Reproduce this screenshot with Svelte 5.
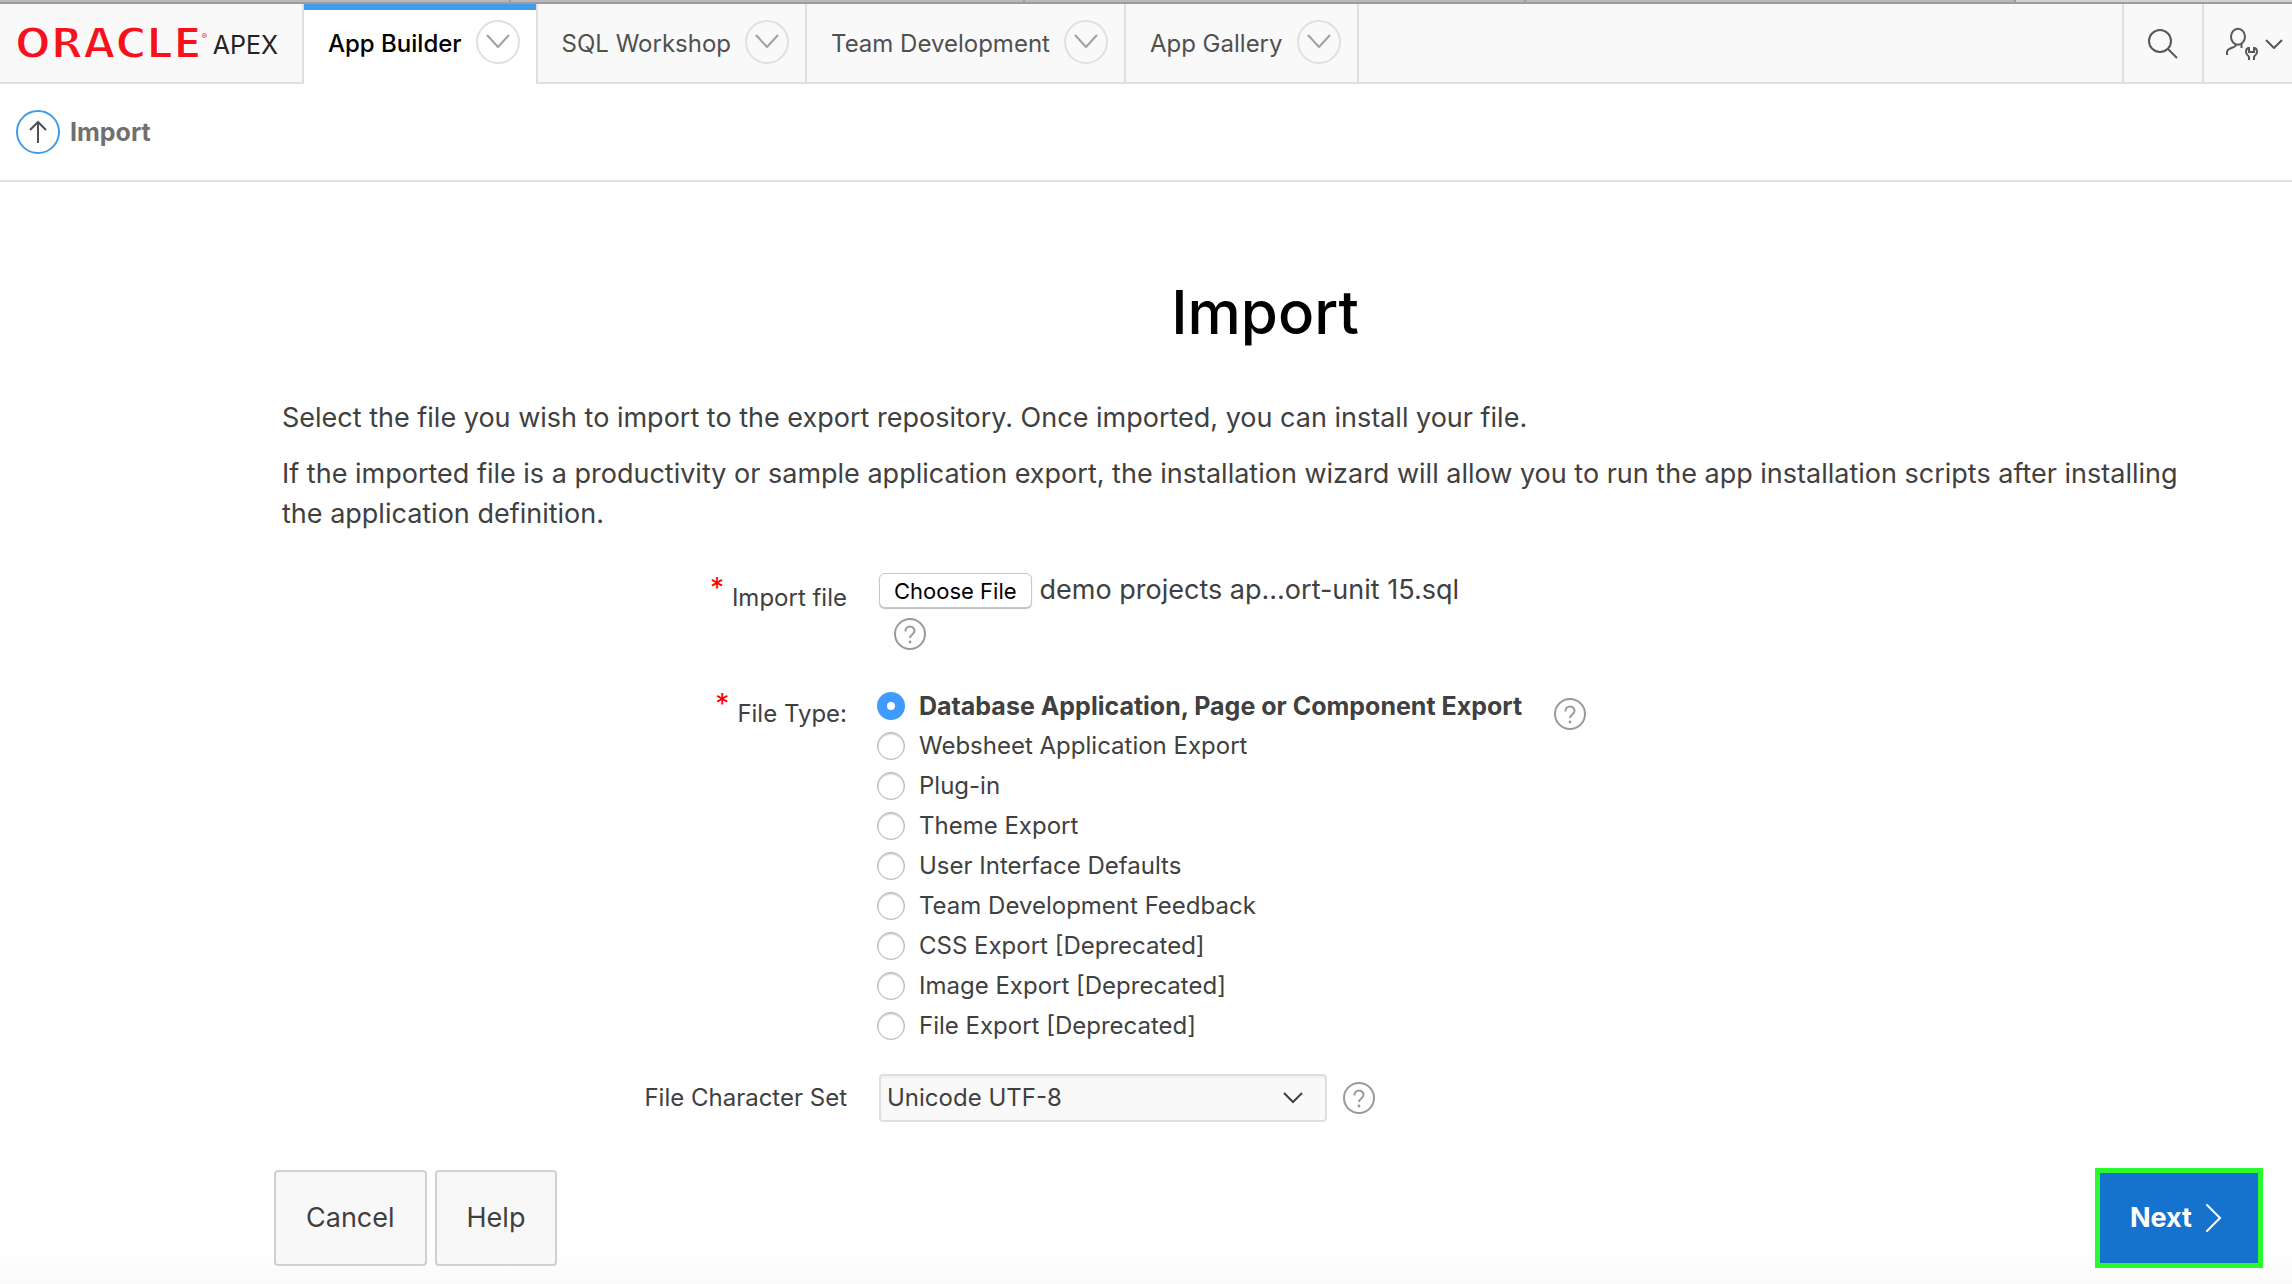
<script>
  const tabs = [
    { name: 'App Builder', active: true },
    { name: 'SQL Workshop', active: false },
    { name: 'Team Development', active: false },
    { name: 'App Gallery', active: false }
  ];

  const fileTypes = [
    'Database Application, Page or Component Export',
    'Websheet Application Export',
    'Plug-in',
    'Theme Export',
    'User Interface Defaults',
    'Team Development Feedback',
    'CSS Export [Deprecated]',
    'Image Export [Deprecated]',
    'File Export [Deprecated]'
  ];

  let fileType = $state(fileTypes[0]);
  let fileName = $state('demo projects ap...ort-unit 15.sql');
  let picker;

  function onPick() {
    if (picker.files.length) fileName = picker.files[0].name;
  }
</script>

{#snippet help(about)}
  <button type="button" class="help" aria-label="Help: {about}">
    <svg viewBox="0 0 32 32" width="32" height="32" fill="none" stroke="#999" stroke-width="2">
      <circle cx="16" cy="16" r="15" />
      <path d="M11.500 13.500v-.5a4.500 4.500 0 0 1 9 0c0 3.500-4.500 3.500-4.500 7" />
      <circle cx="16" cy="24" r="1.400" fill="#999" stroke="none" />
    </svg>
  </button>
{/snippet}

<div class="page">
  <div class="strip"><i></i><i></i><i></i><i></i><i class="light"></i></div>
  <header>
    <a class="logo" href="#home">
      <span class="oracle">ORACLE</span><sup>®</sup><span class="apex">APEX</span>
    </a>
    <nav>
      {#each tabs as tab}
        <div class="tab" class:active={tab.active}>
          <a href="#{tab.name}">{tab.name}</a>
          <button type="button" class="drop" aria-label="{tab.name} menu">
            <svg viewBox="0 0 24 16" width="24" height="16" fill="none" stroke="#a0a0a0" stroke-width="2"><path d="M1 1l11 12L23 1" /></svg>
          </button>
        </div>
      {/each}
    </nav>
    <button type="button" class="tool search" aria-label="Search">
      <svg viewBox="0 0 32 32" width="32" height="32" fill="none" stroke="#585858" stroke-width="2">
        <circle cx="13" cy="13" r="11" /><path d="M21 21l9 9" />
      </svg>
    </button>
    <button type="button" class="tool user" aria-label="Account">
      <svg viewBox="0 0 32 34" width="32" height="34" fill="none" stroke="#585858" stroke-width="2">
        <ellipse cx="12" cy="9.700" rx="7" ry="8" />
        <path d="M9.500 17v2c-1.500 2-8.500 2-8.500 6v3M15.500 17v4" />
        <path d="M23 33v-3c0-1-3-2-3-5 0-2 1-4 3-4v4h5v-4c2 0 3 2 3 4 0 3-3 4-3 5v3" />
      </svg>
      <svg viewBox="0 0 18 10" width="18" height="10" fill="none" stroke="#585858" stroke-width="2"><path d="M1 1l8 8 8-8" /></svg>
    </button>
  </header>

  <div class="crumbs">
    <a class="up" href="#up" aria-label="Up">
      <svg viewBox="0 0 18 24" width="18" height="24" fill="none" stroke="#505050" stroke-width="2"><path d="M9 23V2M1 10l8-8 8 8" /></svg>
    </a>
    <strong>Import</strong>
  </div>

  <main>
    <h1>Import</h1>
    <p>Select the file you wish to import to the export repository. Once imported, you can install your file.</p>
    <p>If the imported file is a productivity or sample application export, the installation wizard will allow you to run the app installation scripts after installing the application definition.</p>

    <form onsubmit={(e) => e.preventDefault()}>
      <div class="row">
        <label class="label" for="import-file"><span class="star">*</span>Import file</label>
        <div>
          <div class="file">
            <input id="import-file" type="file" tabindex="-1" bind:this={picker} onchange={onPick} />
            <button type="button" class="choose" onclick={() => picker.click()}>Choose File</button>
            <span>{fileName}</span>
          </div>
          <div class="below">{@render help('Import file')}</div>
        </div>
      </div>

      <div class="row" role="radiogroup" aria-labelledby="type-label">
        <span class="label" id="type-label"><span class="star">*</span>File Type:</span>
        <div class="types">
          <div>
            {#each fileTypes as type}
              <label class="type" class:chosen={type === fileType}>
                <input type="radio" name="file-type" value={type} bind:group={fileType} />
                {type}
              </label>
            {/each}
          </div>
          {@render help('File Type')}
        </div>
      </div>

      <div class="row middle">
        <label class="label" for="charset">File Character Set</label>
        <div class="charset">
          <div class="select">
            <select id="charset"><option>Unicode UTF-8</option></select>
            <svg viewBox="0 0 20 12" width="20" height="12" fill="none" stroke="#404040" stroke-width="2"><path d="M1 1l9 9 9-9" /></svg>
          </div>
          {@render help('File Character Set')}
        </div>
      </div>
    </form>
  </main>

  <footer>
    <button type="button">Cancel</button>
    <button type="button">Help</button>
    <button type="button" class="next">
      Next
      <svg viewBox="0 0 16 28" width="16" height="28" fill="none" stroke="#fff" stroke-width="2" stroke-linecap="round"><path d="M1 1l13 13L1 27" /></svg>
    </button>
  </footer>
</div>

<style>
  :global(body) { background: #fff; }
  .page {
    display: flex;
    flex-direction: column;
    min-height: 100vh;
    box-sizing: border-box;
    font-family: Inter, 'Liberation Sans', sans-serif;
    font-size: 24px;
    line-height: 40px;
    color: #404040;
    background: linear-gradient(to top, #fafafa, #fff 40px);
  }
  button, select { font: inherit; color: inherit; cursor: pointer; }
  button { padding: 0; border: 0; background: none; }
  svg { display: block; flex: none; }
  a { color: inherit; text-decoration: none; }

  .strip {
    display: grid;
    grid-template-columns: 511fr 514fr 501fr 490fr 276fr;
    border-bottom: 2px solid #9f9ca0;
  }
  .strip i { height: 2px; background: #bab7bb; border-right: 2px solid #9f9ca0; }
  .strip .light { background: #d4d2d6; border-right: 0; }

  header {
    display: flex;
    height: 80px;
    background: linear-gradient(#dfdfdf, #dfdfdf) bottom / 100% 2px no-repeat #f9f9f9;
  }
  .logo {
    display: flex;
    align-items: center;
    box-sizing: border-box;
    width: 304px;
    padding: 0 24px 0 15px;
    border-right: 2px solid #dfdfdf;
  }
  .oracle {
    font-family: 'DejaVu Sans', sans-serif;
    font-size: 42px;
    font-weight: 700;
    color: #f8111c;
    -webkit-text-stroke: 2px #f9f9f9;
  }
  sup { align-self: flex-start; padding-top: 12px; font-size: 8px; color: #f8111c; }
  .apex { margin-left: auto; padding-top: 2px; font-size: 25px; color: #222; }
  nav { display: flex; flex: 1; }
  .tab {
    display: flex;
    align-items: center;
    gap: 14px;
    padding: 0 16px 4px 24px;
    border-right: 2px solid #dfdfdf;
    color: #505050;
  }
  .tab a { padding-top: 3px; }
  .tab.active { background: #fff; box-shadow: inset 0 6px #409ce6; font-weight: 500; color: #000; }
  .drop {
    display: grid;
    place-items: center;
    box-sizing: border-box;
    width: 44px;
    height: 44px;
    border: 2px solid #e0e0e0;
    border-radius: 50%;
  }
  .tool {
    display: flex;
    align-items: center;
    justify-content: center;
    box-sizing: border-box;
    width: 80px;
    border-left: 2px solid #dfdfdf;
  }
  .user { justify-content: flex-start; width: 90px; gap: 7px; padding-left: 22px; }

  .crumbs {
    display: flex;
    align-items: center;
    gap: 10px;
    height: 96px;
    padding-left: 16px;
    border-bottom: 2px solid #dfdfdf;
    font-size: 25px;
    color: #707070;
  }
  .up {
    display: grid;
    place-items: center;
    box-sizing: border-box;
    width: 44px;
    height: 44px;
    border: 2px solid #409ce6;
    border-radius: 50%;
  }

  main { padding: 90px 44px 0 282px; }
  h1 {
    margin: 0 0 46px;
    font-size: 60px;
    line-height: 80px;
    font-weight: 500;
    text-align: center;
    color: #000;
  }
  p { margin: 0 32px 16px 0; font-size: 27px; }
  form { padding-top: 20px; }
  .row { display: grid; grid-template-columns: 565px 1fr; column-gap: 32px; margin-bottom: 28px; }
  .label { display: flex; justify-content: flex-end; gap: 8px; padding-top: 8px; }
  .middle { align-items: center; }
  .middle .label { padding: 0; }
  .star { margin-top: -10px; font-size: 28px; color: #f00; }

  .file { display: flex; align-items: center; gap: 8px; font-size: 27px; }
  .file input { position: absolute; width: 1px; height: 1px; opacity: 0; }
  .choose {
    padding: 1px 14px 0;
    border: 1px solid #c8c8c8;
    border-radius: 6px;
    background: #fff;
    box-shadow: 0 1px 1px #bbb;
    font-size: 22px;
    line-height: 32px;
    color: #000;
  }
  .below { padding: 8px 0 8px 15px; }
  .help { display: block; width: 32px; height: 32px; }

  .types { display: flex; gap: 32px; }
  .types .help { margin-top: 12px; }
  .type { display: flex; align-items: center; gap: 14px; }
  .type.chosen { font-size: 25px; font-weight: 700; }
  .type input {
    appearance: none;
    box-sizing: border-box;
    width: 28px;
    height: 28px;
    margin: 0 0 0 -2px;
    border: 1px solid #b0b0b0;
    border-radius: 50%;
    background: #fff;
    box-shadow: inset 0 1px 2px #bbb;
  }
  .type input:checked { border: 10px solid #409bff; box-shadow: none; }

  .charset { display: flex; align-items: center; gap: 16px; }
  .select { display: grid; align-items: center; width: 448px; }
  .select > * { grid-area: 1 / 1; }
  .select svg { justify-self: end; margin-right: 24px; pointer-events: none; }
  select {
    appearance: none;
    width: 100%;
    height: 48px;
    padding: 0 6px;
    border: 2px solid #dfdfdf;
    border-radius: 4px;
    background: #f9f9f9;
    box-shadow: inset 0 2px 2px #f0f0f0;
  }

  footer { display: flex; align-items: center; gap: 8px; padding: 18px 29px 16px 274px; }
  footer button {
    padding: 0 30px;
    border: 2px solid #d0d0d0;
    border-radius: 4px;
    background: #f8f8f8;
    font-size: 27px;
    line-height: 92px;
  }
  footer .next {
    display: flex;
    align-items: center;
    gap: 14px;
    margin-left: auto;
    padding: 0 36px 0 30px;
    border: 5px solid #29f92d;
    border-radius: 0;
    background: #1673cd;
    font-weight: 700;
    line-height: 90px;
    color: #fff;
  }
</style>
